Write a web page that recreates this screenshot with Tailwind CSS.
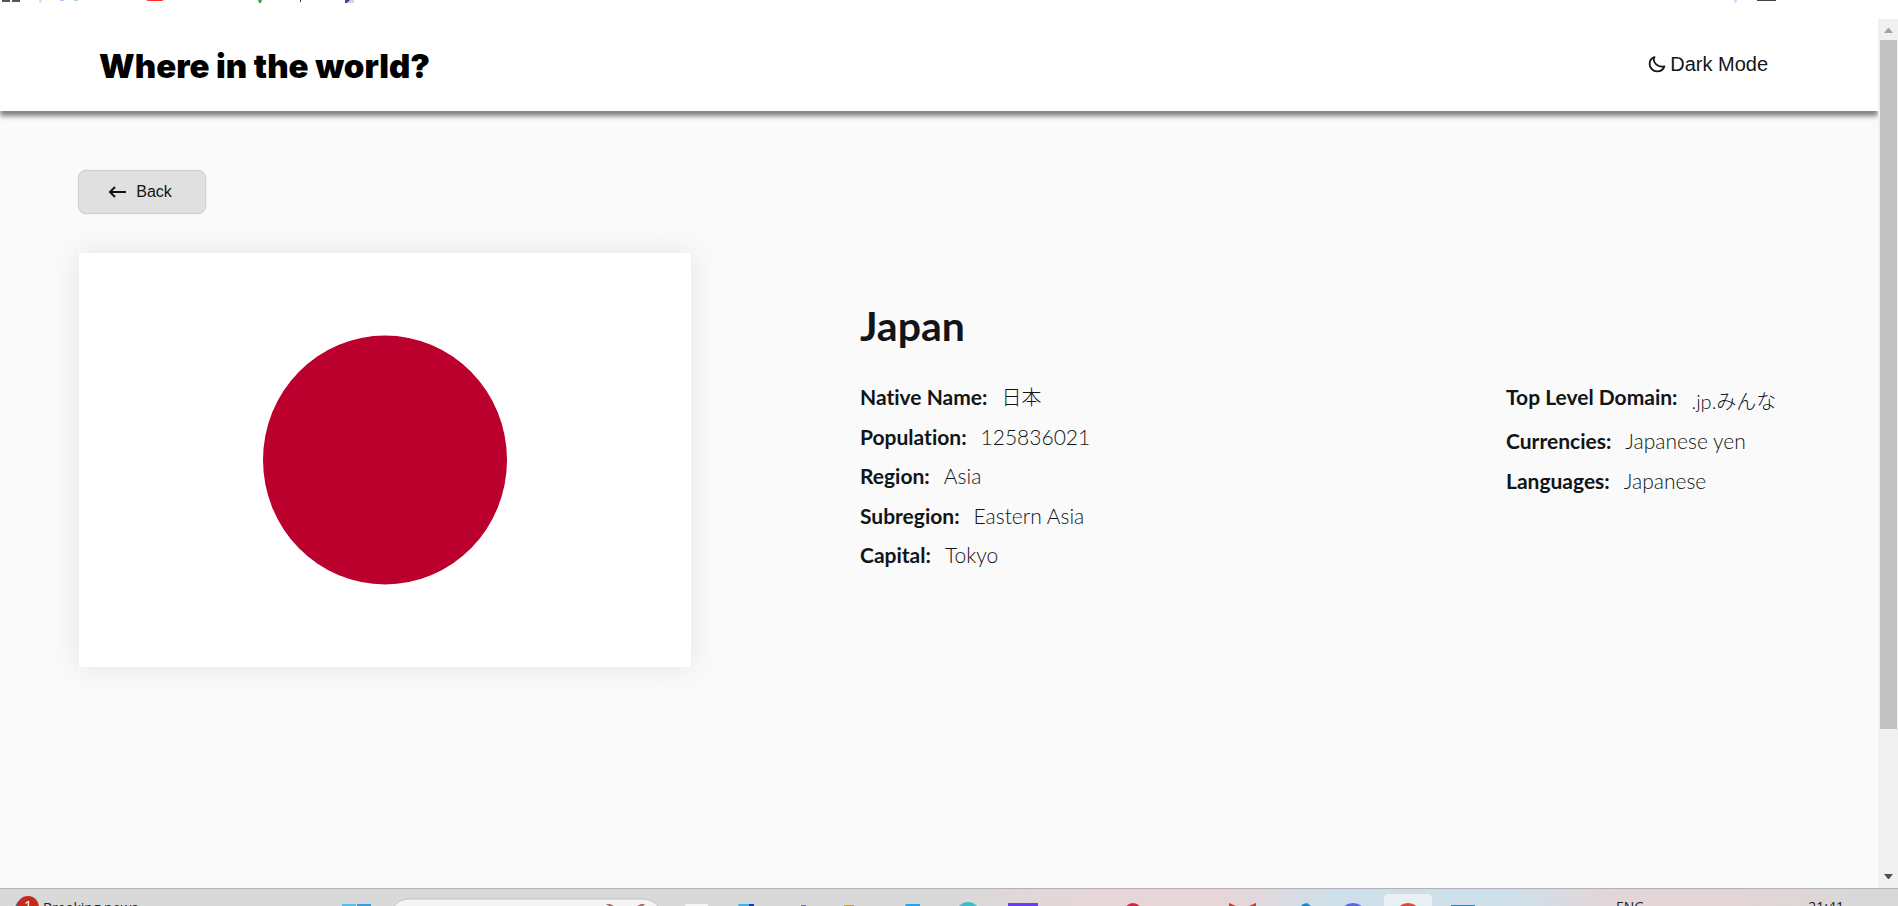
<!DOCTYPE html>
<html lang="en">
<head>
<meta charset="utf-8">
<title>Where in the world?</title>
<script src="https://cdn.jsdelivr.net/npm/@tailwindcss/browser@4"></script>
</head>
<body class="bg-white">
<div class="h-screen overflow-hidden flex flex-col bg-white text-[#111517] font-['Liberation_Sans',sans-serif]">

<!-- Lower edge of the bookmarks bar -->
<div class="h-[19px] shrink-0 flex justify-between" aria-hidden="true">
  <svg class="w-[360px] h-[19px]" viewBox="0 0 360 19">
    <path d="M3 0v1h6V0M13 0v1h6V0" fill="none" stroke="#555" stroke-width="2"/>
    <path d="M39 0h3v2l-2 1h-1z" fill="#d3e3fd"/>
    <path d="M60 0h4v1h-4z" fill="#a8c7fa"/><path d="M74 0h4v1h-4z" fill="#a3dfb5"/>
    <path d="M146 0h18l-2 1h-14z" fill="#ff2b2b"/>
    <path d="M258 0h4l-1 3h-2z" fill="#34a853"/>
    <path d="M300 0h1v2h-1z" fill="#433"/>
    <path d="M348 0h6v3h-6z" fill="#d5d5e0"/><path d="M345 0h5l-3 3h-2z" fill="#3f3fae"/>
  </svg>
  <svg class="w-[164px] h-[19px]" viewBox="0 0 164 19">
    <path d="M0 0h3v2l-2 1h-1z" fill="#d3e3fd"/><path d="M23 0h19v1H23z" fill="#444"/>
  </svg>
</div>

<div class="flex-1 min-h-0 flex overflow-hidden">
  <div class="flex-1 min-w-0 bg-[#fafafa] overflow-hidden">
    <header class="relative h-[92px] bg-white flex items-center justify-between pl-[99px] pr-[110px] shadow-[0_5px_5px_0_#808080]">
      <h1 class="pt-0.5 text-[33px] leading-9 font-black text-black font-['Inter',sans-serif]">Where in the world?</h1>
      <button type="button" class="flex items-center gap-1 pb-0.5 text-xl leading-6">
        <svg class="size-[18px]" viewBox="0 0 512 512" fill="none" stroke="currentColor" stroke-width="52" stroke-linejoin="round"><path d="M185 60C105 85 46 160 46 253c0 114.800 93.200 213 213 213 97.900 0 180-62.700 207-143-22.800 5-47.900 9-74.100 6C270 325 165 230 165 125c0-26 10-50 20-65z"/></svg>
        Dark Mode
      </button>
    </header>

    <main class="pl-[78px] pr-[100px] pt-[59px]">
      <button type="button" class="flex w-[128px] h-11 items-center justify-center gap-2 pr-1 rounded-lg border border-[#cfcfcf] bg-[#e0e0e0] text-base shadow-[0_0_2px_#0000001a]">
        <svg class="size-5" viewBox="0 0 20 20" fill="none" stroke="currentColor" stroke-width="2"><path d="M18 10H2M7 5l-5 5 5 5"/></svg>
        Back
      </button>

      <section class="flex mt-[39px] pl-px">
        <svg class="w-[612px] h-[414px] shrink-0 bg-white shadow-[0_0_29px_#00000018]" viewBox="0 0 612 414" role="img" aria-label="Flag of Japan">
          <ellipse cx="306" cy="207" rx="122" ry="124.500" fill="#bc002d"/>
        </svg>

        <article class="flex-1 ml-[169px] pt-[47px] font-['Lato','Noto_Sans_CJK_JP',sans-serif] text-[21px] leading-7 [font-variant-ligatures:none]">
          <h2 class="text-[41px] leading-[52px] font-bold">Japan</h2>
          <div class="flex justify-between mt-[31px]">
            <dl class="flex flex-col h-[186px] justify-between font-light">
              <div class="flex gap-3.5"><dt class="font-bold">Native Name:</dt><dd lang="ja" class="text-xl leading-7">日本</dd></div>
              <div class="flex gap-3.5"><dt class="font-bold">Population:</dt><dd>125836021</dd></div>
              <div class="flex gap-3.5"><dt class="font-bold">Region:</dt><dd>Asia</dd></div>
              <div class="flex gap-3.5"><dt class="font-bold">Subregion:</dt><dd>Eastern Asia</dd></div>
              <div class="flex gap-3.5"><dt class="font-bold">Capital:</dt><dd>Tokyo</dd></div>
            </dl>
            <dl class="w-[272px] flex flex-col gap-3 font-light whitespace-nowrap">
              <div class="flex gap-3.5"><dt class="font-bold">Top Level Domain:</dt><dd lang="ja" class="pt-1 text-xl leading-7">.jp.みんな</dd></div>
              <div class="flex gap-3.5"><dt class="font-bold">Currencies:</dt><dd>Japanese yen</dd></div>
              <div class="flex gap-3.5"><dt class="font-bold">Languages:</dt><dd>Japanese</dd></div>
            </dl>
          </div>
        </article>
      </section>
    </main>
  </div>

  <!-- Page scrollbar -->
  <div class="w-5 shrink-0 bg-[#f0f0f0] flex flex-col items-center" aria-hidden="true">
    <svg class="w-5 h-[21px] shrink-0" viewBox="0 0 20 21"><path d="M6 14l4-5h1l4 5z" fill="#a3a3a3"/></svg>
    <div class="w-full flex-1 pl-0.5 pr-px"><div class="h-[83%] bg-[#c1c1c1]"></div></div>
    <svg class="w-5 h-[18px] shrink-0" viewBox="0 0 20 18"><path d="M6 4l4 5h1l4-5z" fill="#505050"/></svg>
  </div>
</div>

<!-- Upper edge of the taskbar -->
<footer class="h-[18px] shrink-0 overflow-hidden border-t border-[#b3b3b3] flex items-start text-[#222] text-sm leading-4 font-['Open_Sans',sans-serif] bg-[linear-gradient(90deg,#d9d9d9_50%,#e6d6d8_57%,#e6d6d8_65%,#cfdfe9_70%,#cfdfe9_80%,#e4d5d7_85%,#e4d5d7_92%,#d8d8d8_98%)]">
  <div class="w-[340px] shrink-0 flex gap-1 pl-[17px] pt-[7px]">
    <span class="size-[22px] shrink-0 rounded-full bg-[#c42b1c] shadow-[-2px_2px_0_#3b6fc4] text-white text-center leading-5">1</span>
    <span class="pt-1 whitespace-nowrap">Breaking news</span>
  </div>
  <svg class="w-[1140px] h-[17px] shrink-0" viewBox="340 889 1140 17" aria-hidden="true">
    <path d="M342 904h14v2h-14z" fill="#4cc2f1"/><path d="M357 904h14v2h-14z" fill="#2f9fe0"/>
    <rect x="390" y="899" width="272" height="38" rx="19" fill="#f4f4f4" stroke="#c4c4c4"/>
    <path d="M606 904h4l4 2h-5zM645 904h-4l-4 2h6z" fill="#a86a66"/>
    <path d="M686 904h22v2h-23z" fill="#f6f6f6"/>
    <path d="M739 904h11v2h-12z" fill="#35b6f2"/><path d="M749 904h5v2h-5z" fill="#1539b9"/>
    <path d="M801 905h5v1h-5z" fill="#6a6fd0"/><path d="M844 905h10v1h-10z" fill="#d69b20"/>
    <path d="M906 904h14v2h-15z" fill="#18a9f4"/>
    <circle cx="968" cy="914" r="12" fill="#35bfcf"/>
    <path d="M1008 903h30v3h-30z" fill="#6a3fea"/>
    <circle cx="1133" cy="912" r="9" fill="#dc1f45"/>
    <path d="M1229 903l7 3h-7zM1256 903l-7 3h7z" fill="#c53a3a"/>
    <path d="M1303 904l4-1 4 3h-10z" fill="#148bc8"/>
    <circle cx="1353" cy="917" r="14" fill="#5865f2"/>
    <rect x="1384" y="894" width="48" height="30" rx="4" fill="#e8f0f4"/>
    <circle cx="1408" cy="916" r="13" fill="#ea4335"/>
    <path d="M1451 905h24v1h-24z" fill="#1b83c9"/>
  </svg>
  <div class="flex-1 flex justify-between pl-[136px] pr-[54px] pt-[10px]"><span>ENG</span><time>21:41</time></div>
</footer>
</div>
</body>
</html>
